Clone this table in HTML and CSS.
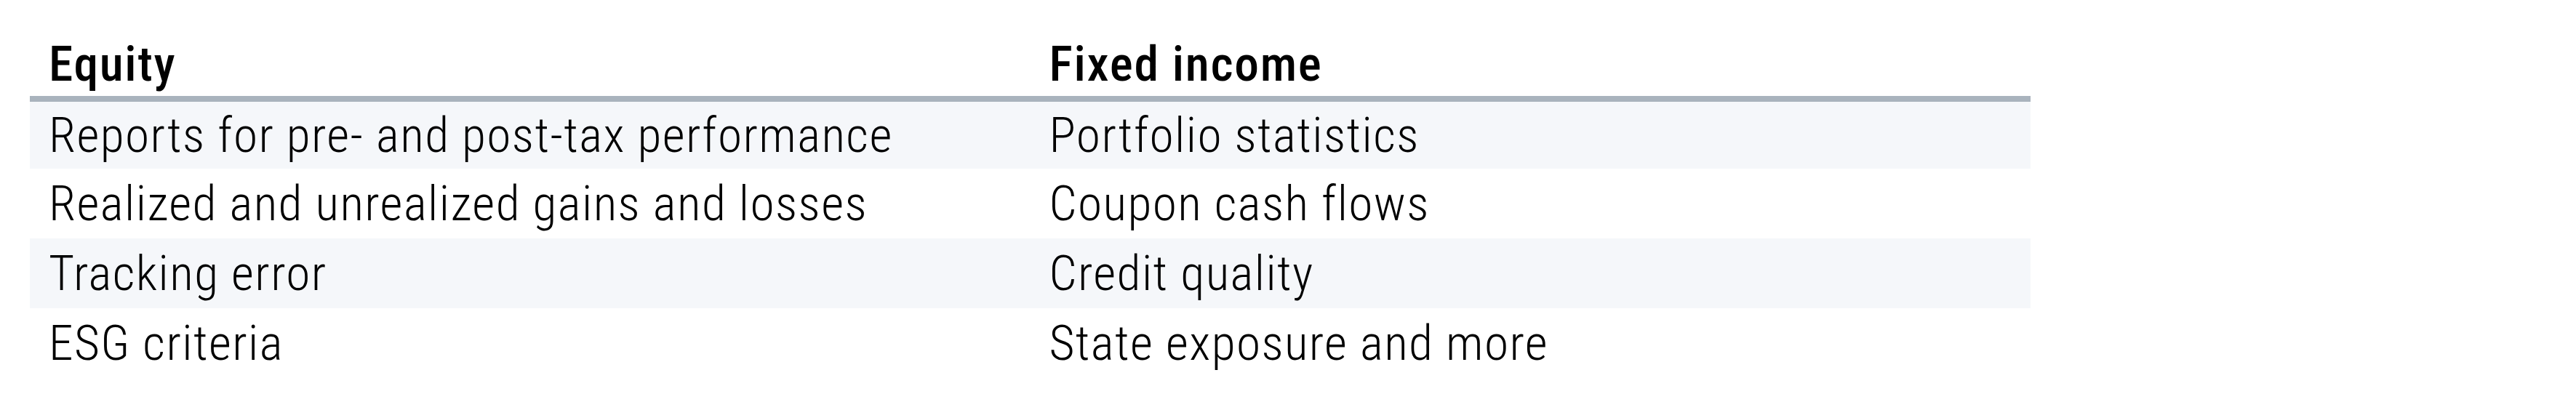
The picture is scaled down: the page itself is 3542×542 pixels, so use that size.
FILE: index.html
```html
<!DOCTYPE html>
<html lang="en">
<head>
<meta charset="utf-8">
<title>Equity and fixed income reporting</title>
<link rel="stylesheet" href="styles.css">
</head>
<body>
<table class="features">
  <thead>
    <tr>
      <th class="head-cell">Equity</th>
      <th class="head-cell">Fixed income</th>
    </tr>
  </thead>
  <tbody>
    <tr class="row row-first">
      <td class="cell">Reports for pre- and post-tax performance</td>
      <td class="cell">Portfolio statistics</td>
    </tr>
    <tr class="row">
      <td class="cell">Realized and unrealized gains and losses</td>
      <td class="cell">Coupon cash flows</td>
    </tr>
    <tr class="row">
      <td class="cell">Tracking error</td>
      <td class="cell">Credit quality</td>
    </tr>
    <tr class="row">
      <td class="cell">ESG criteria</td>
      <td class="cell">State exposure and more</td>
    </tr>
  </tbody>
</table>
</body>
</html>
```
FILE: styles.css
```css
html, body {
  margin: 0;
  padding: 0;
  background: #ffffff;
}

body {
  font-family: Roboto, "Liberation Sans", Arial, sans-serif;
  font-stretch: condensed;
  color: #000000;
}

.features {
  width: 2751px;
  margin: 39px 0 0 41px;
  border-collapse: separate;
  border-spacing: 0;
  table-layout: fixed;
}

.head-cell {
  width: 50%;
  text-align: left;
  font-weight: 500;
  font-size: 67.5px;
  letter-spacing: 1.7px;
  line-height: 88px;
  padding: 5px 26px 0;
  border-bottom: 8px solid #a9b3bd;
  white-space: nowrap;
}

.cell {
  font-weight: 300;
  font-size: 67.5px;
  letter-spacing: 1.4px;
  line-height: 96px;
  padding: 0 26px;
  white-space: nowrap;
}

.row-first .cell {
  line-height: 92px;
}

.row:nth-child(odd) .cell {
  background: #f5f7fa;
}
```
